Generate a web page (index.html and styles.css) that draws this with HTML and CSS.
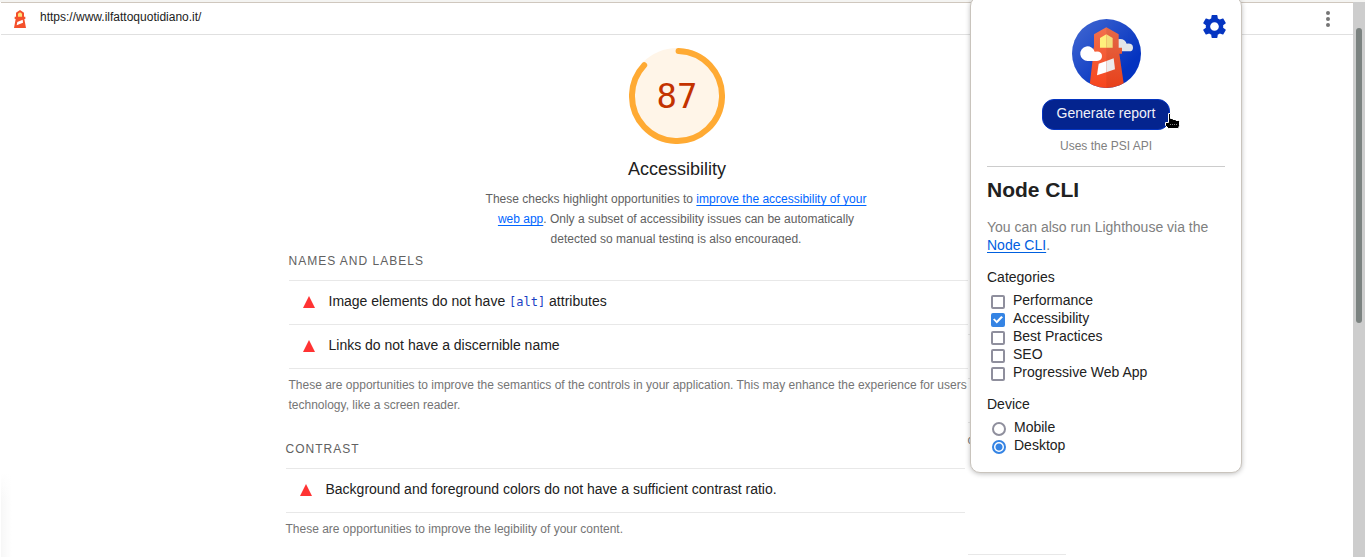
FILE: index.html
```html
<!DOCTYPE html>
<html lang="en">
<head>
<meta charset="utf-8">
<title>Lighthouse Report</title>
<link rel="stylesheet" href="styles.css">
</head>
<body>
<div class="window">
  <main class="report">
    <header class="topbar">
      <svg class="topbar-logo" viewBox="0 0 36 54" aria-hidden="true">
        <path fill="#f4502b" d="M6 8 18 0 30 8V20H34V27H31L36 54H0L5 27H2V20H6Z"/>
        <path fill="#ffe27a" d="M12 11 18 7 24 11V20H12Z"/>
        <path fill="#fff" d="M10 36 26 29 27 38 8 46Z"/>
      </svg>
      <a class="topbar-url" href="#">https://www.ilfattoquotidiano.it/</a>
      <button class="menu-button" aria-label="Tools menu">
        <svg viewBox="0 0 4 16" width="4" height="16"><g fill="#757575"><circle cx="2" cy="2" r="2"/><circle cx="2" cy="8" r="2"/><circle cx="2" cy="14" r="2"/></g></svg>
      </button>
    </header>

    <section class="score">
      <div class="gauge">
        <svg viewBox="0 0 96 96" aria-hidden="true">
          <circle cx="48" cy="48" r="48" fill="#fff5e8"/>
          <circle cx="48" cy="48" r="45" fill="none" stroke="#fa3" stroke-width="6" stroke-linecap="round" stroke-dasharray="244 283" transform="rotate(-88 48 48)"/>
        </svg>
        <span class="gauge-value">87</span>
      </div>
      <h1 class="score-title">Accessibility</h1>
      <p class="score-text">These checks highlight opportunities to <a href="#">improve the accessibility of your web app</a>. Only a subset of accessibility issues can be automatically detected so manual testing is also encouraged.</p>
    </section>

    <div class="audits">
      <div class="audit-column">
        <section class="group">
          <h2 class="group-title">NAMES AND LABELS</h2>
          <ul class="audit-list">
            <li class="audit"><svg class="fail" viewBox="0 0 12 12"><path d="M6 0 12 12H0Z"/></svg><span>Image elements do not have <code>[alt]</code> attributes</span></li>
            <li class="audit"><svg class="fail" viewBox="0 0 12 12"><path d="M6 0 12 12H0Z"/></svg><span>Links do not have a discernible name</span></li>
          </ul>
          <p class="group-text">These are opportunities to improve the semantics of the controls in your application. This may enhance the experience for users<br>technology, like a screen reader.</p>
        </section>
        <section class="group group-contrast">
          <h2 class="group-title">CONTRAST</h2>
          <ul class="audit-list">
            <li class="audit"><svg class="fail" viewBox="0 0 12 12"><path d="M6 0 12 12H0Z"/></svg><span>Background and foreground colors do not have a sufficient contrast ratio.</span></li>
          </ul>
          <p class="group-text">These are opportunities to improve the legibility of your content.</p>
        </section>
      </div>
      <div class="side-column">
        <div class="side-row"></div>
        <div class="side-row"></div>
        <div class="side-text">c</div>
      </div>
    </div>
    <div class="edge-shade"></div>
  </main>
  <div class="scrollbar"><div class="scrollbar-thumb"></div></div>
</div>

<aside class="popup">
  <button class="settings" aria-label="Settings">
    <svg viewBox="0 0 24 24" width="29" height="29"><path fill="#0535c1" d="M19.14 12.94c.04-.3.06-.61.06-.94 0-.32-.02-.64-.07-.94l2.03-1.58c.18-.14.23-.41.12-.61l-1.92-3.32c-.12-.22-.37-.29-.59-.22l-2.39.96c-.5-.38-1.03-.7-1.62-.94l-.36-2.54c-.04-.24-.24-.41-.48-.41h-3.84c-.24 0-.43.17-.47.41l-.36 2.54c-.59.24-1.13.57-1.62.94l-2.39-.96c-.22-.08-.47 0-.59.22L2.74 8.87c-.12.21-.08.47.12.61l2.03 1.58c-.05.3-.09.63-.09.94s.02.64.07.94l-2.03 1.58c-.18.14-.23.41-.12.61l1.92 3.32c.12.22.37.29.59.22l2.39-.96c.5.38 1.03.7 1.62.94l.36 2.54c.05.24.24.41.48.41h3.84c.24 0 .44-.17.47-.41l.36-2.54c.59-.24 1.13-.56 1.62-.94l2.39.96c.22.08.47 0 .59-.22l1.92-3.32c.12-.22.07-.47-.12-.61l-2.01-1.58zM12 15.6c-1.98 0-3.6-1.62-3.6-3.6s1.62-3.6 3.6-3.6 3.6 1.62 3.6 3.6-1.62 3.6-3.6 3.6z"/></svg>
  </button>
  <svg class="popup-logo" viewBox="0 0 207 207" aria-hidden="true">
    <defs>
      <linearGradient id="sky" x1="0" y1="0" x2="1" y2="1"><stop offset=".1" stop-color="#3c63d0"/><stop offset=".75" stop-color="#0433c0"/></linearGradient>
      <linearGradient id="tower" x1="0" y1="0" x2="0" y2="1"><stop offset="0" stop-color="#f2704d"/><stop offset="1" stop-color="#f7451d"/></linearGradient>
      <clipPath id="disc"><circle cx="103.500" cy="103.500" r="103.500"/></clipPath>
    </defs>
    <g clip-path="url(#disc)">
      <path fill="url(#sky)" d="M0 0H207V207H0Z"/>
      <path fill="#e3e5e8" d="M130 97V62Q158 54 164 74Q183 72 183 86Q183 97 172 97Z"/>
      <path fill="url(#tower)" d="M66 46 103 25 140 46V86H150V104H142L157 207H52L64 104V86H66Z"/>
      <path fill="#000" opacity=".06" d="M103 25 140 46V86H150V104H142L157 207H103Z"/>
      <path fill="#fff07c" d="M84 57 103 46V86H84Z"/>
      <path fill="#f3de7a" d="M103 46 122 57V86H103Z"/>
      <path fill="#fff" d="M80 134 103 126V160L75 169Z"/>
      <path fill="#ececec" d="M103 126 125 118 129 151 103 160Z"/>
      <path fill="#fff" d="M47 126A22 22 0 1 1 68 98Q89 94 90 111Q90 125 75 126Z"/>
    </g>
  </svg>
  <button class="generate">Generate report</button>
  <p class="api-note">Uses the PSI API</p>
  <hr class="divider">
  <h2 class="popup-title">Node CLI</h2>
  <p class="popup-text">You can also run Lighthouse via the <a href="#">Node CLI</a>.</p>
  <fieldset class="options">
    <legend>Categories</legend>
    <label><input type="checkbox">Performance</label>
    <label><input type="checkbox" checked>Accessibility</label>
    <label><input type="checkbox">Best Practices</label>
    <label><input type="checkbox">SEO</label>
    <label><input type="checkbox">Progressive Web App</label>
  </fieldset>
  <fieldset class="options options-device">
    <legend>Device</legend>
    <label><input type="radio" name="device">Mobile</label>
    <label><input type="radio" name="device" checked>Desktop</label>
  </fieldset>
  <svg class="pointer" viewBox="0 0 15 16" aria-hidden="true">
    <path fill="#000" stroke="#fff" d="M3.500.5H5.500V5.500H8V6.500H11V7.500H13.500L14.500 8.500V12.500L13.500 15.500H3.500L.5 12.500V9.500H3.500Z"/>
    <path stroke="#888" stroke-dasharray="1 1" d="M5 11.500H12"/>
  </svg>
</aside>
</body>
</html>
```
FILE: styles.css
```css
* { box-sizing: border-box; }

body {
  margin: 0;
  font-family: "Liberation Sans", Arial, sans-serif;
  font-size: 14px;
  color: #212121;
  background: #fff;
  overflow: hidden;
}

h1, h2, p, ul { margin: 0; padding: 0; font-weight: normal; }
ul { list-style: none; }
button { border: 0; padding: 0; background: none; font: inherit; }

.window { display: flex; min-height: 100vh; border-top: 2px solid #f4f4f2; }

.report {
  position: relative;
  flex: 1;
  min-width: 0;
  margin-left: 1px;
  border-top: 1px solid #cfc7be;
}

.topbar {
  display: flex;
  align-items: center;
  gap: 14px;
  height: 32px;
  padding: 0 23px 0 13px;
  border-bottom: 1px solid #e0e0e0;
}
.topbar-logo { width: 12px; height: 18px; }
.topbar-url { flex: 1; padding-bottom: 4px; font-size: 12px; color: #212121; text-decoration: none; }
.menu-button { display: flex; }

.score { display: flex; flex-direction: column; align-items: center; padding-top: 13px; }
.gauge { display: grid; width: 96px; height: 96px; place-items: center; }
.gauge svg, .gauge-value { grid-area: 1 / 1; }
.gauge-value { font-family: "DejaVu Sans Mono", monospace; font-size: 34px; line-height: 40px; color: #c33300; }
.score-title { margin-top: 13px; font-size: 18px; line-height: 24px; }
.score-text {
  width: 384px;
  height: 55px;
  margin-top: 8px;
  padding-right: 2px;
  overflow: hidden;
  font-size: 12px;
  line-height: 20px;
  text-align: center;
  color: #616161;
}
.score-text a {
  color: #06f;
  text-underline-offset: 2px;
}

.audits { display: flex; justify-content: center; padding-right: 3px; }
.audit-column { width: 682px; }
.side-column { width: 98px; margin-top: 90px; }

.group { margin-left: 3px; }
.group-contrast { margin: 17px 3px 0 0; }
.group-title { font-size: 12px; line-height: 20px; letter-spacing: 1px; color: #616161; padding: 7px 0 9px; }
.audit-list { border-top: 1px solid #e8e8e8; }
.audit {
  display: flex;
  align-items: center;
  gap: 14px;
  height: 44px;
  padding: 0 0 2px 14px;
  border-bottom: 1px solid #e8e8e8;
}
.audit span { padding-bottom: 2px; }
.audit code { font-family: "DejaVu Sans Mono", monospace; font-size: 12px; color: #1a40c4; }
.fail { width: 12px; height: 12px; fill: #f33; }
.group-text { padding-top: 6px; font-size: 12px; line-height: 20px; color: #757575; white-space: nowrap; }

.side-row { height: 44px; border-top: 1px solid #e8e8e8; }
.side-text {
  height: 133px;
  padding-top: 7px;
  border: solid #e8e8e8;
  border-width: 1px 0;
  font-size: 12px;
  line-height: 20px;
  color: #757575;
}

.edge-shade {
  position: absolute;
  left: 0;
  bottom: 0;
  width: 11px;
  height: 84px;
  background: linear-gradient(to right, rgba(255, 255, 255, 0), #fff), linear-gradient(#fff, #f7f7f7 30px);
}

.scrollbar { width: 12px; padding: 26px 3px 0; background: #cdcdcd; }
.scrollbar-thumb { height: 295px; border-radius: 3px; background: #7b8280; }

.popup {
  position: absolute;
  top: -4px;
  right: 123px;
  display: flex;
  flex-direction: column;
  width: 272px;
  padding: 22px 16px 18px;
  border: 1px solid #c9c4bd;
  border-radius: 10px;
  background: #fff;
  box-shadow: 0 1px 5px rgba(0, 0, 0, .25);
}
.settings { position: absolute; top: 15px; right: 12px; display: flex; }
.popup-logo { align-self: center; width: 69px; height: 69px; }
.generate {
  align-self: center;
  width: 128px;
  height: 31px;
  margin-top: 11px;
  padding-bottom: 4px;
  border: 1px solid #0535c1;
  border-radius: 12px;
  background: #04248f;
  color: #f0f0f8;
}
.api-note { margin-top: 8px; font-size: 12px; line-height: 16px; text-align: center; color: #808080; }
.divider { width: 100%; height: 1px; margin: 12px 0 0; border: 0; background: #ccc; }
.popup-title { margin-top: 11px; font-size: 21px; line-height: 24px; font-weight: bold; }
.popup-text { margin-top: 16px; line-height: 18px; color: #808080; }
.popup-text a { color: #0060df; text-underline-offset: 2px; }

.options { margin: 14px 0 0; padding: 0; border: 0; min-width: 0; }
.options-device { margin-top: 14px; }
.options legend { padding: 0 0 5px; line-height: 18px; }
.options label { display: flex; gap: 8px; height: 18px; line-height: 18px; padding-left: 4px; }
.options-device label { padding-left: 5px; }
.options input {
  appearance: none;
  width: 14px;
  height: 14px;
  margin: 4px 0 0;
  border: 2px solid #8f8f9d;
  border-radius: 2px;
  background: #fff;
}
.options input[type="checkbox"]:checked {
  border-color: #3584e4;
  background: #3584e4;
  display: grid;
  place-items: center;
}
.options input[type="checkbox"]:checked::before {
  content: "";
  width: 10px;
  height: 8px;
  background: #fff;
  clip-path: polygon(0 45%, 15% 30%, 36% 58%, 82% 0, 100% 16%, 38% 94%);
}
.options input[type="radio"] { border-radius: 50%; }
.options input[type="radio"]:checked {
  border-color: #3584e4;
  background: radial-gradient(circle, #3584e4 3px, #fff 4px);
}

.pointer { position: absolute; left: 194px; top: 116px; width: 15px; height: 16px; fill: none; }
```
